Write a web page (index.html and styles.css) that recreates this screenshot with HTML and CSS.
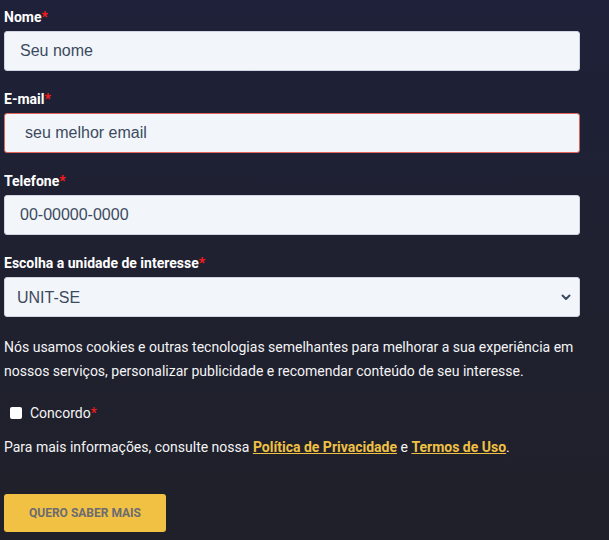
FILE: index.html
```html
<!DOCTYPE html>
<html lang="pt-BR">
<head>
<meta charset="utf-8">
<title>Formulário</title>
<link rel="stylesheet" href="styles.css">
</head>
<body>
<form class="form">
  <div class="field">
    <label class="label" for="nome">Nome<span class="req">*</span></label>
    <input class="input" id="nome" type="text" placeholder="Seu nome">
  </div>
  <div class="field">
    <label class="label" for="email">E-mail<span class="req">*</span></label>
    <input class="input input-error" id="email" type="email" placeholder="seu melhor email">
  </div>
  <div class="field">
    <label class="label" for="tel">Telefone<span class="req">*</span></label>
    <input class="input" id="tel" type="tel" placeholder="00-00000-0000">
  </div>
  <div class="field">
    <label class="label" for="unidade">Escolha a unidade de interesse<span class="req">*</span></label>
    <div class="select-wrap">
      <select class="input select" id="unidade">
        <option>UNIT-SE</option>
      </select>
      <svg class="chevron" width="10" height="7" viewBox="0 0 10 7"><path d="M1.5 1.5 L5 5 L8.5 1.5" fill="none" stroke="#3c4a5e" stroke-width="2" stroke-linecap="round" stroke-linejoin="round"/></svg>
    </div>
  </div>
  <p class="consent">Nós usamos cookies e outras tecnologias semelhantes para melhorar a sua experiência em nossos serviços, personalizar publicidade e recomendar conteúdo de seu interesse.</p>
  <label class="check-row"><input class="check" type="checkbox"><span>Concordo<span class="req">*</span></span></label>
  <p class="info">Para mais informações, consulte nossa <a href="#" class="link">Política de Privacidade</a> e <a href="#" class="link">Termos de Uso</a>.</p>
  <button class="btn" type="button">Quero saber mais</button>
</form>
</body>
</html>
```
FILE: styles.css
```css
html, body {
  margin: 0;
  padding: 0;
}
body {
  min-height: 540px;
  background: linear-gradient(180deg, #1e2139 0%, #1f2130 50%, #1f2029 100%);
  font-family: Roboto, "Liberation Sans", sans-serif;
  color: #f4f4f6;
}
.form {
  width: 576px;
  padding: 9px 0 0 4px;
  display: flex;
  flex-direction: column;
}
.field {
  display: flex;
  flex-direction: column;
  margin-bottom: 20px;
}
.label {
  font-size: 14px;
  font-weight: 700;
  line-height: 16px;
  margin-bottom: 6px;
  color: #ffffff;
}
.req {
  color: #ff1a1a;
}
.input {
  box-sizing: border-box;
  width: 576px;
  height: 40px;
  border: 1px solid #cdd5e0;
  border-radius: 3px;
  background: #f2f6fa;
  padding: 0 15px;
  font-family: "Liberation Sans", Arial, sans-serif;
  font-size: 16px;
  color: #3c4a5e;
  outline: none;
}
.input::placeholder {
  color: #3c4a5e;
  opacity: 1;
}
.input-error {
  border-color: #e0645c;
  padding-left: 20px;
}
.select-wrap {
  position: relative;
  width: 576px;
}
.select {
  appearance: none;
  -webkit-appearance: none;
  padding-left: 12px;
}
.chevron {
  position: absolute;
  right: 9px;
  top: 17px;
  pointer-events: none;
}
.consent {
  margin: -2px 0 0 0;
  font-size: 14px;
  line-height: 24px;
  width: 600px;
}
.check-row {
  display: flex;
  align-items: center;
  height: 24px;
  margin-top: 18px;
  font-size: 14px;
  padding-left: 6px;
}
.check {
  appearance: none;
  -webkit-appearance: none;
  width: 12px;
  height: 12px;
  margin: 0 8px 0 0;
  background: #ffffff;
  border-radius: 2px;
  border: none;
}
.info {
  margin: 10px 0 0 0;
  font-size: 14px;
  line-height: 24px;
}
.link {
  color: #f0c043;
  font-weight: 700;
  text-decoration: underline;
}
.btn {
  margin-top: 35px;
  width: 162px;
  height: 38px;
  border: none;
  border-radius: 3px;
  background: #f1c144;
  color: #6c6c72;
  font-family: Roboto, "Liberation Sans", sans-serif;
  font-weight: 700;
  font-size: 12px;
  text-transform: uppercase;
  padding: 0;
}
```
